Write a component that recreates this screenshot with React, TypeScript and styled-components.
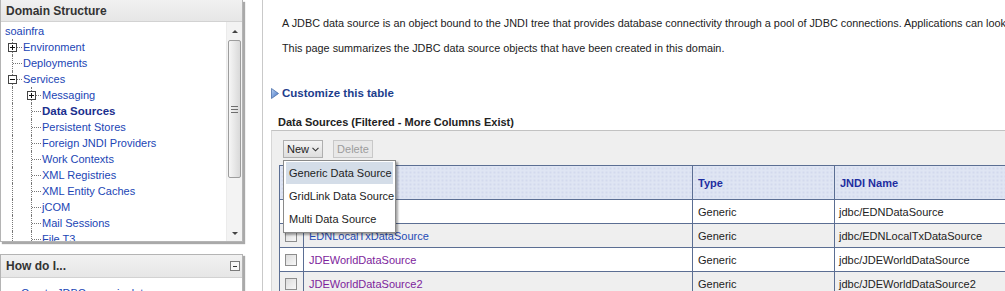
import React from 'react'
import styled, { createGlobalStyle, css } from 'styled-components'

const GlobalStyle = createGlobalStyle`
  html, body {
    margin: 0;
    padding: 0;
    background: #fff;
  }
  body {
    font-family: 'Liberation Sans', Arial, sans-serif;
    font-size: 11px;
    color: #222;
  }
`

const Page = styled.div`
  display: flex;
  width: 1005px;
  height: 291px;
  overflow: hidden;
  background: #fff;
`

/* ---------- left column ---------- */

const LeftColumn = styled.div`
  flex: 0 0 262px;
  display: flex;
  flex-direction: column;
  gap: 12px;
  border-right: 1px solid #c9c9c9;
`

const Panel = styled.div<{ $height: number; $top?: boolean }>`
  flex: none;
  width: 243px;
  height: ${p => p.$height}px;
  box-sizing: border-box;
  display: flex;
  flex-direction: column;
  background: #fff;
  border: 1px solid #b4b4b4;
  border-top: ${p => (p.$top ? '1px solid #b4b4b4' : 'none')};
  box-shadow: 2px 2px 1px #a9a9a9;
`

const PanelHeader = styled.div<{ $h: number }>`
  flex: none;
  height: ${p => p.$h}px;
  display: flex;
  align-items: center;
  justify-content: space-between;
  padding: 0 2px 0 5px;
  font-size: 12px;
  font-weight: bold;
  color: #333;
  background: linear-gradient(#f1f1f1, #e6e6e6);
  border-bottom: 1px solid #d2d2d2;
`

const CollapseBox = styled.span`
  position: relative;
  width: 10px;
  height: 10px;
  box-sizing: border-box;
  border: 1px solid #7b7b7b;
  background: #f7f7f7;
  &::before {
    content: '';
    position: absolute;
    left: 2px;
    right: 2px;
    top: 4px;
    border-top: 1px solid #333;
  }
`

const TreeBody = styled.div`
  flex: 1;
  min-height: 0;
  display: flex;
`

const TreeList = styled.div`
  flex: 1;
  overflow: hidden;
  padding-top: 1px;
`

const TreeRow = styled.div<{ $root?: boolean }>`
  height: 16px;
  display: flex;
  align-items: center;
  white-space: nowrap;
  padding-left: ${p => (p.$root ? 4 : 3)}px;
`

const Guide = styled.span<{ $kind: 'pipe' | 'tee' }>`
  position: relative;
  flex: 0 0 19px;
  align-self: stretch;
  &::before {
    content: '';
    position: absolute;
    left: 8px;
    top: 0;
    bottom: 0;
    border-left: 1px dotted #777;
  }
  ${p =>
    p.$kind === 'tee' &&
    css`
      &::after {
        content: '';
        position: absolute;
        left: 9px;
        right: 1px;
        top: 8px;
        border-top: 1px dotted #777;
      }
    `}
`

const Toggle = styled.span<{ $open?: boolean }>`
  position: absolute;
  left: 4px;
  top: 4px;
  z-index: 1;
  width: 9px;
  height: 9px;
  box-sizing: border-box;
  border: 1px solid #444;
  background: #fff;
  &::before {
    content: '';
    position: absolute;
    left: 1px;
    right: 1px;
    top: 3px;
    border-top: 1px solid #111;
  }
  ${p =>
    !p.$open &&
    css`
      &::after {
        content: '';
        position: absolute;
        top: 1px;
        bottom: 1px;
        left: 3px;
        border-left: 1px solid #111;
      }
    `}
`

const TreeLink = styled.span<{ $bold?: boolean }>`
  color: ${p => (p.$bold ? '#1b2f8e' : '#2145b5')};
  font-weight: ${p => (p.$bold ? 'bold' : 'normal')};
  font-size: ${p => (p.$bold ? '11.5px' : '11px')};
`

const ScrollTrack = styled.div`
  flex: 0 0 15px;
  display: flex;
  flex-direction: column;
  background: #f3f3f3;
  border-left: 1px solid #ebebeb;
`

const ScrollArrow = styled.div<{ $dir: 'up' | 'down' }>`
  flex: none;
  height: ${p => (p.$dir === 'up' ? 18 : 16)}px;
  display: flex;
  align-items: center;
  justify-content: center;
  margin-top: ${p => (p.$dir === 'down' ? 'auto' : '0')};
  &::before {
    content: '';
    border-left: 3px solid transparent;
    border-right: 3px solid transparent;
    ${p =>
      p.$dir === 'up'
        ? css`border-bottom: 3px solid #444;`
        : css`border-top: 3px solid #444;`}
  }
`

const ScrollThumb = styled.div`
  flex: none;
  height: 138px;
  margin: 0 1px;
  box-sizing: border-box;
  border: 1px solid #9d9d9d;
  border-radius: 2px;
  background: linear-gradient(to right, #f6f6f6, #d9d9d9);
  display: flex;
  align-items: center;
  justify-content: center;
`

const Grip = styled.span`
  width: 7px;
  height: 7px;
  background: repeating-linear-gradient(#6e6e6e 0 1px, transparent 1px 3px);
`

const HowBody = styled.div`
  padding: 9px 0 0 20px;
`

const HowLink = styled.span`
  color: #2145b5;
  white-space: nowrap;
`

/* ---------- main column ---------- */

const Main = styled.div`
  flex: 1;
  min-width: 0;
  display: flex;
  flex-direction: column;
  padding: 16px 0 0 8px;
`

const Intro = styled.p`
  margin: 0 0 11px 11px;
  line-height: 14px;
  font-size: 10.85px;
  white-space: nowrap;
`

const CustomizeRow = styled.div`
  margin-top: 21px;
  height: 14px;
  display: flex;
  align-items: center;
  gap: 3px;
  font-weight: bold;
  font-size: 11.5px;
  color: #1d3d8c;
`

const SectionTitle = styled.div`
  margin-top: 16px;
  padding-left: 7px;
  line-height: 14px;
  font-weight: bold;
  font-size: 11px;
  color: #222;
  white-space: nowrap;
`

const TableBox = styled.div`
  margin-top: 1px;
  flex: 1;
  background: #efefef;
  border-top: 1px solid #c2c2c2;
  border-left: 1px solid #d6d6d6;
  padding: 9px 0 0 7px;
`

const Toolbar = styled.div`
  position: relative;
  height: 18px;
  display: flex;
  gap: 10px;
  padding-left: 4px;
  margin-bottom: 7px;
`

const ToolButton = styled.span<{ $disabled?: boolean }>`
  position: relative;
  width: 40px;
  height: 18px;
  box-sizing: border-box;
  display: flex;
  align-items: center;
  justify-content: center;
  gap: 3px;
  font-size: 11px;
  border: 1px solid ${p => (p.$disabled ? '#c8c8c8' : '#afafaf')};
  background: ${p => (p.$disabled ? '#e8e8e8' : 'linear-gradient(#f4f4f4, #dedede)')};
  color: ${p => (p.$disabled ? '#9c9c9c' : '#222')};
`

const Menu = styled.div`
  position: absolute;
  left: -1px;
  top: 19px;
  z-index: 5;
  width: 113px;
  box-sizing: border-box;
  padding: 1px 2px 1px;
  background: #fff;
  border: 1px solid #8a8a8a;
  box-shadow: 2px 2px 2px rgba(0, 0, 0, 0.35);
`

const MenuItem = styled.div<{ $active?: boolean }>`
  height: 22px;
  margin-bottom: 1px;
  padding-left: 3px;
  display: flex;
  align-items: center;
  white-space: nowrap;
  color: #222;
  background: ${p => (p.$active ? '#d4dde8' : 'transparent')};
`

const Table = styled.table`
  border-collapse: collapse;
  table-layout: fixed;
  width: 900px;
`

const HeadCell = styled.th<{ $w: number; $pad?: number }>`
  width: ${p => p.$w}px;
  height: 34px;
  box-sizing: border-box;
  padding: 0 0 0 ${p => p.$pad ?? 5}px;
  text-align: left;
  font-weight: bold;
  color: #1e2da0;
  border: 1px solid #5b6e93;
  background-color: #dfe5f3;
  background-image: radial-gradient(#c3cbe6 0.6px, transparent 0.8px);
  background-size: 4px 4px;
`

const BodyRow = styled.tr<{ $alt?: boolean }>`
  height: 24px;
  background: ${p => (p.$alt ? '#efefef' : '#fff')};
`

const Cell = styled.td<{ $pad?: number }>`
  padding: 0 0 0 ${p => p.$pad ?? 5}px;
  border: 1px solid #5b6e93;
  white-space: nowrap;
  overflow: hidden;
  color: #222;
`

const Checkbox = styled.span`
  display: block;
  width: 12px;
  height: 12px;
  box-sizing: border-box;
  border: 1px solid #8d8d8d;
  background: linear-gradient(135deg, #dcdcdc, #f7f7f7);
`

const NameLink = styled.span<{ $visited?: boolean }>`
  color: ${p => (p.$visited ? '#7d1e9c' : '#1f4bb5')};
`

function DisclosureIcon() {
  return (
    <svg width="8" height="11" viewBox="0 0 8 11">
      <defs>
        <linearGradient id="disc" x1="0" y1="0" x2="1" y2="1">
          <stop offset="0" stopColor="#bcd3f2" />
          <stop offset="1" stopColor="#3d6fc4" />
        </linearGradient>
      </defs>
      <path d="M0.5 0.5 L7.5 5.5 L0.5 10.5 Z" fill="url(#disc)" stroke="#4a6ea8" strokeWidth="0.8" />
    </svg>
  )
}

function Chevron() {
  return (
    <svg width="7" height="5" viewBox="0 0 7 5">
      <path d="M0.5 0.8 L3.5 3.8 L6.5 0.8" fill="none" stroke="#333" strokeWidth="1.1" />
    </svg>
  )
}

type TreeItem = {
  label: string
  guides: { kind: 'pipe' | 'tee'; toggle?: 'open' | 'closed' }[]
  bold?: boolean
}

const tree: TreeItem[] = [
  { label: 'soainfra', guides: [] },
  { label: 'Environment', guides: [{ kind: 'tee', toggle: 'closed' }] },
  { label: 'Deployments', guides: [{ kind: 'tee' }] },
  { label: 'Services', guides: [{ kind: 'tee', toggle: 'open' }] },
  { label: 'Messaging', guides: [{ kind: 'pipe' }, { kind: 'tee', toggle: 'closed' }] },
  { label: 'Data Sources', guides: [{ kind: 'pipe' }, { kind: 'tee' }], bold: true },
  ...['Persistent Stores', 'Foreign JNDI Providers', 'Work Contexts', 'XML Registries', 'XML Entity Caches', 'jCOM', 'Mail Sessions', 'File T3'].map(
    label => ({ label, guides: [{ kind: 'pipe' as const }, { kind: 'tee' as const }] })
  ),
]

const rows = [
  { name: 'EDNDataSource', type: 'Generic', jndi: 'jdbc/EDNDataSource', visited: false },
  { name: 'EDNLocalTxDataSource', type: 'Generic', jndi: 'jdbc/EDNLocalTxDataSource', visited: false },
  { name: 'JDEWorldDataSource', type: 'Generic', jndi: 'jdbc/JDEWorldDataSource', visited: true },
  { name: 'JDEWorldDataSource2', type: 'Generic', jndi: 'jdbc/JDEWorldDataSource2', visited: true },
]

export default function App() {
  return (
    <>
      <GlobalStyle />
      <Page>
        <LeftColumn>
          <Panel $height={242}>
            <PanelHeader $h={21}>Domain Structure</PanelHeader>
            <TreeBody>
              <TreeList>
                {tree.map(item => (
                  <TreeRow key={item.label} $root={item.guides.length === 0}>
                    {item.guides.map((g, i) => (
                      <Guide key={i} $kind={g.kind}>
                        {g.toggle && <Toggle $open={g.toggle === 'open'} />}
                      </Guide>
                    ))}
                    <TreeLink $bold={item.bold}>{item.label}</TreeLink>
                  </TreeRow>
                ))}
              </TreeList>
              <ScrollTrack>
                <ScrollArrow $dir="up" />
                <ScrollThumb>
                  <Grip />
                </ScrollThumb>
                <ScrollArrow $dir="down" />
              </ScrollTrack>
            </TreeBody>
          </Panel>
          <Panel $height={120} $top>
            <PanelHeader $h={22}>
              How do I...
              <CollapseBox />
            </PanelHeader>
            <HowBody>
              <HowLink>Create JDBC generic data sources</HowLink>
            </HowBody>
          </Panel>
        </LeftColumn>

        <Main>
          <Intro>
            A JDBC data source is an object bound to the JNDI tree that provides database connectivity through a pool of JDBC
            connections. Applications can look up a data source on the JNDI tree and then borrow a database connection from a data source.
          </Intro>
          <Intro>This page summarizes the JDBC data source objects that have been created in this domain.</Intro>
          <CustomizeRow>
            <DisclosureIcon />
            Customize this table
          </CustomizeRow>
          <SectionTitle>Data Sources (Filtered - More Columns Exist)</SectionTitle>
          <TableBox>
            <Toolbar>
              <ToolButton>
                New <Chevron />
                <Menu>
                  <MenuItem $active>Generic Data Source</MenuItem>
                  <MenuItem>GridLink Data Source</MenuItem>
                  <MenuItem>Multi Data Source</MenuItem>
                </Menu>
              </ToolButton>
              <ToolButton $disabled>Delete</ToolButton>
            </Toolbar>
            <Table>
              <thead>
                <tr>
                  <HeadCell $w={24} />
                  <HeadCell $w={389}>Name</HeadCell>
                  <HeadCell $w={142}>Type</HeadCell>
                  <HeadCell $w={345} $pad={5}>JNDI Name</HeadCell>
                </tr>
              </thead>
              <tbody>
                {rows.map((r, i) => (
                  <BodyRow key={r.name} $alt={i % 2 === 1}>
                    <Cell>
                      <Checkbox />
                    </Cell>
                    <Cell>
                      <NameLink $visited={r.visited}>{r.name}</NameLink>
                    </Cell>
                    <Cell>{r.type}</Cell>
                    <Cell $pad={4}>{r.jndi}</Cell>
                  </BodyRow>
                ))}
              </tbody>
            </Table>
          </TableBox>
        </Main>
      </Page>
    </>
  )
}
